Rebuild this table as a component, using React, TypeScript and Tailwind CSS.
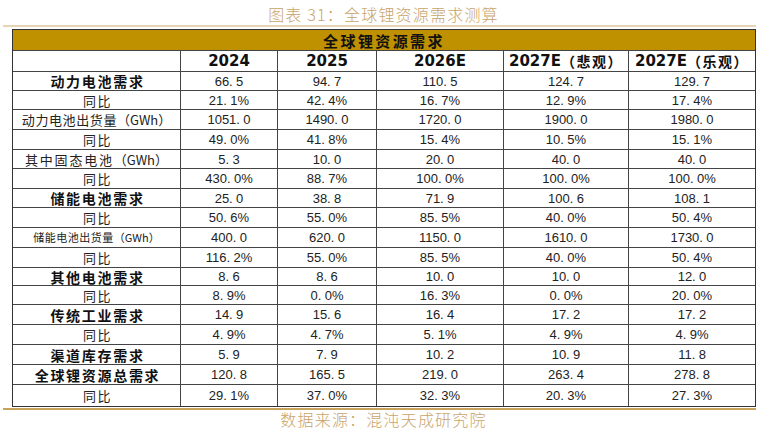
import React from "react";

type Row = { label: string; kind: "bold" | "yoy" | "ship" | "solid" | "small"; h: string; vals: string[] };

const rows: Row[] = [
  { label: "动力电池需求", kind: "bold", h: "h-[19px]", vals: ["66.5", "94.7", "110.5", "124.7", "129.7"] },
  { label: "同比", kind: "yoy", h: "h-[19px]", vals: ["21.1%", "42.4%", "16.7%", "12.9%", "17.4%"] },
  { label: "动力电池出货量", kind: "ship", h: "h-[20px]", vals: ["1051.0", "1490.0", "1720.0", "1900.0", "1980.0"] },
  { label: "同比", kind: "yoy", h: "h-[20px]", vals: ["49.0%", "41.8%", "15.4%", "10.5%", "15.1%"] },
  { label: "其中固态电池", kind: "solid", h: "h-[19px]", vals: ["5.3", "10.0", "20.0", "40.0", "40.0"] },
  { label: "同比", kind: "yoy", h: "h-[20px]", vals: ["430.0%", "88.7%", "100.0%", "100.0%", "100.0%"] },
  { label: "储能电池需求", kind: "bold", h: "h-[19px]", vals: ["25.0", "38.8", "71.9", "100.6", "108.1"] },
  { label: "同比", kind: "yoy", h: "h-[20px]", vals: ["50.6%", "55.0%", "85.5%", "40.0%", "50.4%"] },
  { label: "储能电池出货量", kind: "small", h: "h-[20px]", vals: ["400.0", "620.0", "1150.0", "1610.0", "1730.0"] },
  { label: "同比", kind: "yoy", h: "h-[20px]", vals: ["116.2%", "55.0%", "85.5%", "40.0%", "50.4%"] },
  { label: "其他电池需求", kind: "bold", h: "h-[18px]", vals: ["8.6", "8.6", "10.0", "10.0", "12.0"] },
  { label: "同比", kind: "yoy", h: "h-[19px]", vals: ["8.9%", "0.0%", "16.3%", "0.0%", "20.0%"] },
  { label: "传统工业需求", kind: "bold", h: "h-[20px]", vals: ["14.9", "15.6", "16.4", "17.2", "17.2"] },
  { label: "同比", kind: "yoy", h: "h-[20px]", vals: ["4.9%", "4.7%", "5.1%", "4.9%", "4.9%"] },
  { label: "渠道库存需求", kind: "bold", h: "h-[20px]", vals: ["5.9", "7.9", "10.2", "10.9", "11.8"] },
  { label: "全球锂资源总需求", kind: "bold", h: "h-[20px]", vals: ["120.8", "165.5", "219.0", "263.4", "278.8"] },
  { label: "同比", kind: "yoy", h: "h-[21px]", vals: ["29.1%", "37.0%", "32.3%", "20.3%", "27.3%"] },
];

const GRID = "grid grid-cols-[168px_97px_99px_127px_125px_126px]";
const CJK = "font-['Noto_Sans_CJK_SC',sans-serif]";

function Num({ v }: { v: string }) {
  return (
    <span className="font-['Liberation_Sans',Arial,sans-serif] text-[13px] leading-[15px] text-[#222] whitespace-nowrap">
      {v.split("").map((c, i) =>
        c === "." ? (
          <span key={i} className="inline-block w-[7px] text-left">
            .
          </span>
        ) : (
          <span key={i}>{c}</span>
        )
      )}
    </span>
  );
}

function Label({ r }: { r: Row }) {
  if (r.kind === "bold")
    return (
      <span className={`${CJK} text-[14px] leading-[16px] font-bold tracking-[1.7px] pl-[2px] text-[#111] whitespace-nowrap`}>
        {r.label}
      </span>
    );
  if (r.kind === "yoy")
    return (
      <span className={`${CJK} text-[13px] leading-[15px] tracking-[1.5px] pl-[2px] text-[#222]`}>{r.label}</span>
    );
  if (r.kind === "ship")
    return (
      <span className={`${CJK} text-[13px] leading-[15px] text-[#222] whitespace-nowrap`}>
        <span className="tracking-[0.6px]">{r.label}</span>
        <span>（GWh）</span>
      </span>
    );
  if (r.kind === "solid")
    return (
      <span className={`${CJK} text-[13px] leading-[15px] text-[#222] whitespace-nowrap`}>
        <span className="tracking-[1.8px]">{r.label}</span>
        <span>（GWh）</span>
      </span>
    );
  return (
    <span className={`${CJK} text-[11px] leading-[13px] text-[#222] whitespace-nowrap`}>
      <span className="tracking-[0.5px]">{r.label}</span>
      <span>（GWh）</span>
    </span>
  );
}

const years: { y: string; s?: string }[] = [
  { y: "2024" },
  { y: "2025" },
  { y: "2026E" },
  { y: "2027E", s: "（悲观）" },
  { y: "2027E", s: "（乐观）" },
];

export default function App() {
  return (
    <div className="w-[767px] h-[430px] bg-white overflow-hidden">
      <div
        className={`h-[25px] pt-[3px] flex items-center justify-center ${CJK} font-light text-[16px] leading-[18px] tracking-[1.2px] text-[#c8a46a]`}
      >
        图表 31：全球锂资源需求测算
      </div>
      <div className="ml-[3px] w-[753px] h-[2px] bg-[#e4d6b4]" />
      <div className="ml-[12px] mt-[2px] w-[744px] border border-[#333]">
        <div className="h-[21px] bg-[#bf9000] border-b border-[#444] flex items-center justify-center">
          <span className={`${CJK} text-[15px] leading-[17px] font-bold tracking-[2.4px] text-[#111]`}>全球锂资源需求</span>
        </div>
        <div className={`${GRID} h-[21px] border-b border-[#444]`}>
          <div className="border-r border-[#444]" />
          {years.map((c, i) => (
            <div
              key={i}
              className={`flex items-center justify-center whitespace-nowrap ${i < 4 ? "border-r border-[#444]" : ""}`}
            >
              <span className="font-['DejaVu_Sans',sans-serif] font-bold text-[15px] leading-[17px] text-[#111]">{c.y}</span>
              {c.s && (
                <span className={`${CJK} font-bold text-[14px] leading-[16px] tracking-[1.5px] text-[#111]`}>{c.s}</span>
              )}
            </div>
          ))}
        </div>
        {rows.map((r, ri) => (
          <div key={ri} className={`${GRID} ${r.h} ${ri < rows.length - 1 ? "border-b border-[#444]" : ""}`}>
            <div className="border-r border-[#444] flex items-center justify-center overflow-visible">
              <Label r={r} />
            </div>
            {r.vals.map((v, vi) => (
              <div
                key={vi}
                className={`flex items-center justify-center ${vi < 4 ? "border-r border-[#444]" : ""}`}
              >
                <Num v={v} />
              </div>
            ))}
          </div>
        ))}
      </div>
      <div className="ml-[3px] mt-[1px] w-[753px] h-[2px] bg-[#c9a35c]" />
      <div
        className={`h-[18px] flex items-center justify-center ${CJK} font-light text-[16px] leading-[18px] tracking-[1.2px] text-[#c8a46a]`}
      >
        数据来源：混沌天成研究院
      </div>
    </div>
  );
}
